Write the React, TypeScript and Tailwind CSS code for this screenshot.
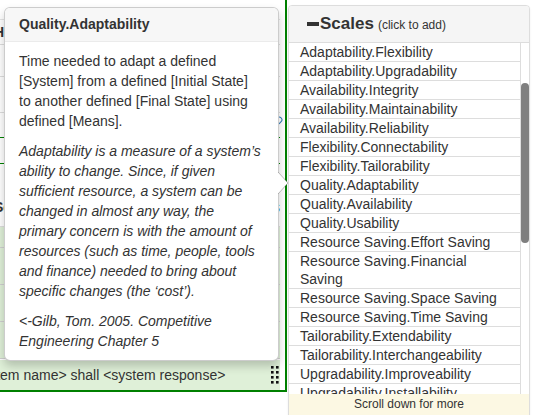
import { Link } from "lucide-react";

const defLines = [
  "Time needed to adapt a defined",
  "[System] from a defined [Initial State]",
  "to another defined [Final State] using",
  "defined [Means].",
];

const noteLines = [
  "Adaptability is a measure of a system’s",
  "ability to change. Since, if given",
  "sufficient resource, a system can be",
  "changed in almost any way, the",
  "primary concern is with the amount of",
  "resources (such as time, people, tools",
  "and finance) needed to bring about",
  "specific changes (the ‘cost’).",
];

const refLines = ["<-Gilb, Tom. 2005. Competitive", "Engineering Chapter 5"];

const scales = [
  "Adaptability.Flexibility",
  "Adaptability.Upgradability",
  "Availability.Integrity",
  "Availability.Maintainability",
  "Availability.Reliability",
  "Flexibility.Connectability",
  "Flexibility.Tailorability",
  "Quality.Adaptability",
  "Quality.Availability",
  "Quality.Usability",
  "Resource Saving.Effort Saving",
  "Resource Saving.Financial Saving",
  "Resource Saving.Space Saving",
  "Resource Saving.Time Saving",
  "Tailorability.Extendability",
  "Tailorability.Interchangeability",
  "Upgradability.Improveability",
  "Upgradability.Installability",
  "Usability.Intuitiveness",
];

const Lines = ({ lines }: { lines: string[] }) => (
  <>
    {lines.map((l, i) => (
      <span key={i} className="block whitespace-nowrap">
        {l}
      </span>
    ))}
  </>
);

const Grip = () => (
  <svg width="8" height="18" viewBox="0 0 8 18" className="shrink-0">
    {[0, 5, 10, 15].map((y) =>
      [0, 5].map((x) => <rect key={`${x}-${y}`} x={x} y={y} width="2.6" height="2.6" fill="#111" />)
    )}
  </svg>
);

const ItemRow = ({ text, last }: { text: string; last?: boolean }) => (
  <div
    className={
      last
        ? "flex h-[30px] shrink-0 items-center justify-between overflow-hidden bg-[#dff0d8] pr-[1px]"
        : "flex h-[37px] shrink-0 items-center justify-between overflow-hidden border-b border-[#cfcfcf] bg-[#dff0d8] pr-[1px] pl-[10px]"
    }
  >
    <span className={last ? "-ml-[33px] whitespace-nowrap" : "whitespace-nowrap"}>{text}</span>
    <Grip />
  </div>
);

const Background = () => (
  <div className="flex h-[392px] w-[287px] shrink-0 flex-col overflow-hidden border-r-2 border-b-2 border-[#008000] pr-[5px] text-[14px]">
    <div className="h-[20px] shrink-0 border-b border-[#e5e5e5]" />
    <div className="flex h-[25px] shrink-0 items-center border-b border-[#ddd] font-bold">
      <span className="-ml-[6px]">How</span>
    </div>
    <div className="h-[32px] shrink-0 border-b border-[#ddd]" />
    <div className="h-[36px] shrink-0 border-b border-[#ddd]" />
    <div className="flex h-[24px] shrink-0 items-start justify-end pt-[3px]">
      <Link size={13} className="-mr-[3px] text-[#337ab7]" />
    </div>
    <div className="h-[27px] shrink-0 border-y border-[#008000]" />
    <div className="flex h-[63px] shrink-0 items-end justify-between border-b border-[#ddd] pb-[8px]">
      <span className="-ml-[6px] font-bold">Scales</span>
      <span className="text-[#337ab7]">Scales</span>
    </div>
    <div className="h-[21px] shrink-0 border-b border-[#cfcfcf] bg-[#dff0d8]" />
    <ItemRow text="The system shall respond" />
    <ItemRow text="The system shall respond" />
    <ItemRow text="The system shall respond" />
    <div className="h-[1px] shrink-0" />
    <ItemRow text="<system name> shall <system response>" last />
  </div>
);

const Popover = () => (
  <div className="absolute left-[4px] top-[7px] w-[275px] rounded-[6px] border border-[rgba(0,0,0,0.2)] bg-white text-[14px] shadow-[0_5px_10px_rgba(0,0,0,0.2)]">
    <div className="rounded-t-[5px] border-b border-[#ebebeb] bg-[#f7f7f7] px-[14px] py-[8px] text-[14px] font-bold leading-[17px]">
      Quality.Adaptability
    </div>
    <div className="px-[14px] py-[9px] leading-[20px]">
      <p className="mb-[10px]">
        <Lines lines={defLines} />
      </p>
      <p className="mb-[10px] italic">
        <Lines lines={noteLines} />
      </p>
      <p className="italic">
        <Lines lines={refLines} />
      </p>
    </div>
    <svg width="10" height="22" viewBox="0 0 10 22" className="absolute -right-[10px] top-[164px]">
      <path d="M0 0 L10 11 L0 22" fill="white" stroke="rgba(0,0,0,0.25)" strokeWidth="1" />
    </svg>
  </div>
);

const ScalesPanel = () => (
  <div className="ml-[1px] mt-[5px] flex h-[412px] w-[242px] shrink-0 flex-col overflow-hidden rounded-t-[4px] border border-[#ddd] bg-white shadow-[0_1px_2px_rgba(0,0,0,0.08)]">
    <div className="flex h-[37px] shrink-0 items-center border-b border-[#ddd] bg-[#f5f5f5] pl-[18px]">
      <span className="h-[4px] w-[12px] bg-[#333]" />
      <span className="ml-[1px] text-[17px] font-bold">Scales</span>
      <span className="ml-[4px] mt-[2px] text-[12px]">(click to add)</span>
    </div>
    <div className="flex min-h-0 flex-1">
      <div className="w-[232px] overflow-hidden border-r border-[#ddd]">
        {scales.map((s) => (
          <div key={s} className="border-b border-[#ddd] pl-[11px] pr-[20px] text-[14px] leading-[18px]">
            {s}
          </div>
        ))}
      </div>
      <div className="w-[8px] shrink-0">
        <div className="mt-[40px] h-[160px] w-[8px] rounded-full bg-[#7f7f7f]" />
      </div>
    </div>
    <div className="h-[22px] shrink-0 bg-[#fcf8e3] text-center text-[12px] leading-[20px]">
      Scroll down for more
    </div>
  </div>
);

export default function App() {
  return (
    <div className="relative flex h-[415px] w-[537px] overflow-hidden bg-white font-['Liberation_Sans',Arial,sans-serif] text-[#333]">
      <Background />
      <ScalesPanel />
      <Popover />
    </div>
  );
}
